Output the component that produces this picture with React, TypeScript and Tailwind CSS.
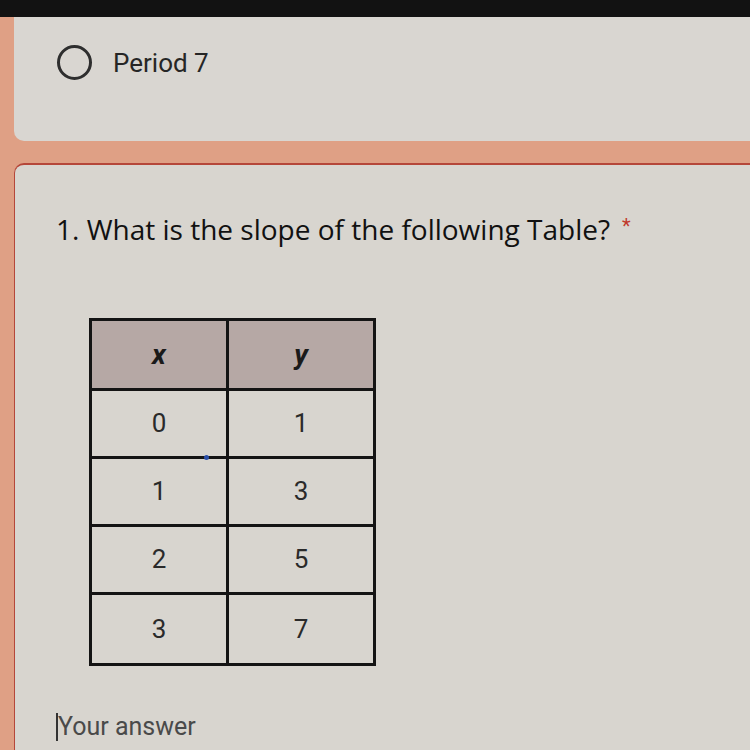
import React from "react";

const rows: [string, string][] = [
  ["0", "1"],
  ["1", "3"],
  ["2", "5"],
  ["3", "7"],
];

export default function App() {
  return (
    <div
      className="w-[750px] h-[750px] overflow-hidden bg-[#dfa085] flex flex-col"
      style={{ fontFamily: "Roboto, 'Liberation Sans', sans-serif" }}
    >
      <div className="h-[17px] bg-[#121212] shrink-0" />
      <div className="flex-1 flex flex-col pl-[14px]">
        <div className="h-[124px] bg-[#d9d6d1] rounded-bl-[10px] pl-[43px] pt-[28px] shrink-0">
          <div className="flex items-center gap-[21px]">
            <div className="w-[35px] h-[35px] rounded-full border-[3px] border-[#2e2e2e]" />
            <span className="text-[26px] leading-[34px] text-[#262626]">Period 7</span>
          </div>
        </div>
        <div className="h-[22px] shrink-0" />
        <div className="flex-1 bg-[#d8d5cf] rounded-tl-[10px] border-t-2 border-l-[1.5px] border-[#b5473a] pl-[41px] pt-[47px]">
          <div className="flex items-start">
            <span
              className="text-[28px] leading-[34px] text-[#111111]"
              style={{ fontFamily: "'Open Sans', Roboto, sans-serif" }}
            >
              1. What is the slope of the following Table?
            </span>
            <span className="text-[20px] leading-[24px] text-[#c0392b] ml-[12px] mt-[2px]">*</span>
          </div>
          <div className="mt-[72px] ml-[33px] relative w-fit">
            <div className="grid grid-cols-[137px_144px] border-[3px] border-[#141414]">
              <div className="h-[70px] bg-[#b6a8a5] border-r-[3px] border-b-[3px] border-[#141414] flex items-center justify-center">
                <span className="text-[28px] font-bold italic text-[#1a1a1a]">x</span>
              </div>
              <div className="h-[70px] bg-[#b6a8a5] border-b-[3px] border-[#141414] flex items-center justify-center">
                <span className="text-[28px] font-bold italic text-[#1a1a1a]">y</span>
              </div>
              {rows.map(([a, b], i) => (
                <React.Fragment key={i}>
                  <div
                    className={`h-[68px] border-r-[3px] border-[#141414] flex items-center justify-center ${
                      i < rows.length - 1 ? "border-b-[3px]" : ""
                    }`}
                  >
                    <span className="text-[26px] text-[#2a2a2a]">{a}</span>
                  </div>
                  <div
                    className={`h-[68px] border-[#141414] flex items-center justify-center ${
                      i < rows.length - 1 ? "border-b-[3px]" : ""
                    }`}
                  >
                    <span className="text-[26px] text-[#2a2a2a]">{b}</span>
                  </div>
                </React.Fragment>
              ))}
            </div>
            <div className="absolute left-[115px] top-[137px] w-[5px] h-[5px] rounded-full bg-[#2a4fa8]" />
          </div>
          <div className="mt-[46px] flex items-center">
            <div className="w-[2px] h-[28px] bg-[#333]" />
            <span className="text-[25px] leading-[30px] text-[#4a4a4a]">Your answer</span>
          </div>
        </div>
      </div>
    </div>
  );
}
